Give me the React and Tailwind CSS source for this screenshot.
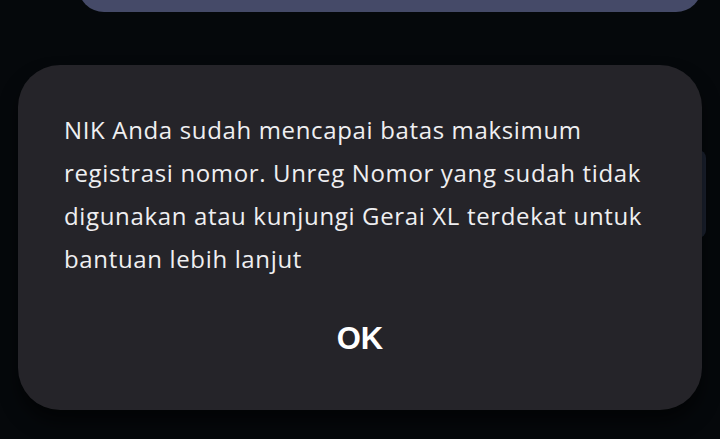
const lines = [
  'NIK Anda sudah mencapai batas maksimum',
  'registrasi nomor. Unreg Nomor yang sudah tidak',
  'digunakan atau kunjungi Gerai XL terdekat untuk',
  'bantuan lebih lanjut',
]

export default function App() {
  return (
    <div className="w-[720px] h-[439px] overflow-hidden bg-[#05080b] relative" style={{ fontFamily: 'Roboto, "Noto Sans", sans-serif' }}>
      {/* top button behind dim */}
      <div className="ml-[78px] mr-[18px] -mt-[40px] h-[52px] rounded-[26px] bg-[#454a68]" />

      {/* card edge peeking on the right */}
      <div className="absolute left-[690px] top-[150px] w-[16px] h-[88px] rounded-r-[8px] bg-[#1c2230]" />

      {/* dialog */}
      <div className="relative mx-[18px] mt-[53px] h-[345px] rounded-[42px] bg-[#252429] shadow-[0_12px_18px_rgba(0,0,0,0.55)] flex flex-col">
        <div className="pl-[46px] pt-[43px] text-[24px] leading-[43px] text-[#efeff1] whitespace-nowrap" style={{ fontFamily: '"Open Sans", sans-serif' }}>
          {lines.map(l => (
            <div key={l} className="tracking-[0.65px]">{l}</div>
          ))}
        </div>
        <div className="flex justify-center mt-[43px]">
          <span className="text-[31px] font-bold text-white leading-none" style={{ fontFamily: '"Liberation Sans", Arial, sans-serif' }}>OK</span>
        </div>
      </div>
    </div>
  )
}
